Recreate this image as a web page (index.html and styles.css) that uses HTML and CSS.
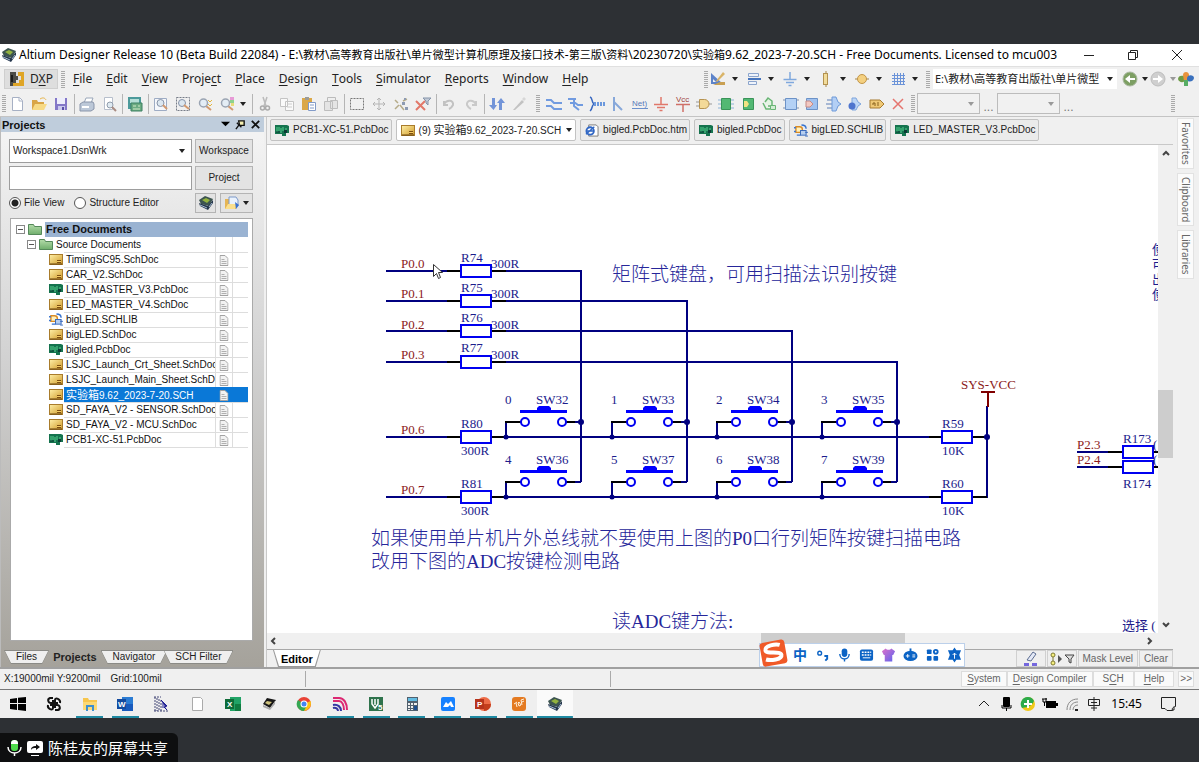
FILE: index.html
```html
<!DOCTYPE html>
<html lang="zh-CN">
<head>
<meta charset="utf-8">
<title>Altium Designer Release 10</title>
<link rel="stylesheet" href="styles.css">
</head>
<body>
<svg class="defs" aria-hidden="true">
  <defs>
    <linearGradient id="gold" x1="0" y1="0" x2="1" y2="1"><stop offset="0" stop-color="#fff0a8"/><stop offset="1" stop-color="#d09a28"/></linearGradient>
    <linearGradient id="leaf" x1="0" y1="0" x2="0" y2="1"><stop offset="0" stop-color="#b4dcaa"/><stop offset="1" stop-color="#6fae6c"/></linearGradient>
    <linearGradient id="shirt" x1="0" y1="0" x2="1" y2="1"><stop offset="0" stop-color="#e070c8"/><stop offset="1" stop-color="#5a62f0"/></linearGradient>
  </defs>
  <symbol id="caret" viewBox="0 0 8 8"><path d="M1 2h6L4 6z" fill="currentColor"/></symbol>
  <symbol id="chip" viewBox="0 0 16 16"><path d="M1 5l6-4 8 3-4 7-8-2z" fill="#3c5450"/><path d="M4 5l4-2 4 2-3 3z" fill="#93b33f"/><path d="M1 8l9 3 5-6v3l-5 7-2-1-6-3z" fill="#25364c"/><path d="M2 10l7 3M11 12l3-4" stroke="#a6bdd5"/></symbol>
  <symbol id="sch" viewBox="0 0 14 11"><rect x=".5" y=".5" width="13" height="10" fill="url(#gold)" stroke="#a97c2c"/><path d="M1 10h12" stroke="#67420f"/><rect x="8" y="6" width="4" height="3" fill="#7d4f12"/><path d="M8 7.500h4" stroke="#f4cd64"/></symbol>
  <symbol id="pcb" viewBox="0 0 14 11"><path d="M0 0h12l2 1v7h-3v3H7V9H0z" fill="#15734e"/><path d="M2 2v5M4 2v4M6 3v5M8 2v4M11 3v5" stroke="#56d28e"/><path d="M9 5h3v3H9z" fill="#0b3b35"/><path d="M1 7h4" stroke="#0b3b35"/></symbol>
  <symbol id="lib" viewBox="0 0 15 14"><path d="M2 3h4a3 3 0 0 1 0 6H2z" fill="#fff1bd" stroke="#d98b24" stroke-width="1.500"/><path d="M8 1c4 0 5 2 5 4M0 4h2M0 8h2M3 12h4" stroke="#3572cf" fill="none" stroke-width="1.500"/><rect x="7" y="7" width="6" height="5" fill="#b6ceef" stroke="#3265ba"/><path d="M12 9h3M12 13h3" stroke="#3265ba"/></symbol>
  <symbol id="folder" viewBox="0 0 14 11"><path d="M.5.500h5l1 2h7v8H.5z" fill="url(#leaf)" stroke="#55895a"/></symbol>
  <symbol id="page" viewBox="0 0 9 11"><path d="M.5.500h5l3 3v7h-8z" fill="#f2f2f2" stroke="#a2a2a2"/><path d="M2 4.500h3M2 6.500h5M2 8.500h5" stroke="#b0b0b0"/></symbol>
  <symbol id="glass" viewBox="0 0 16 16"><path d="M9 10l5 4" stroke="#d29a70" stroke-width="2"/><circle cx="6.500" cy="7" r="4" fill="#e4edf5" stroke="#9aa4b2" stroke-width="1.500"/></symbol>
</svg>

<div class="desktop">
<header class="titlebar">
  <svg class="i16" viewBox="0 0 16 16"><use href="#chip"/></svg>
  <h1>Altium Designer Release 10 (Beta Build 22084) - E:\<span class="han">教材</span>\<span class="han">高等教育出版社</span>\<span class="han">单片微型计算机原理及接口技术</span>-<span class="han">第三版</span>\<span class="han">资料</span>\20230720\<span class="han">实验箱</span>9.62_2023-7-20.SCH - Free Documents. Licensed to mcu003</h1>
  <div class="winbtns">
    <button aria-label="Minimize"><svg viewBox="0 0 12 12"><path d="M1 6.500h10" stroke="#222"/></svg></button>
    <button aria-label="Restore"><svg viewBox="0 0 12 12"><path d="M1.500 3.500h7v7h-7zM3.500 3.500v-2h7v7h-2" fill="none" stroke="#222"/></svg></button>
    <button aria-label="Close"><svg viewBox="0 0 12 12"><path d="M1 1l10 10M11 1L1 11" stroke="#222"/></svg></button>
  </div>
</header>

<div class="menubar">
  <button class="dxp"><svg class="i16" viewBox="0 0 16 16"><path d="M1 1h6v4h2v4H7v6H1z" fill="#4b4b46"/><path d="M9 1h6v14H4v-3h6V9h2V5H9z" fill="#dfa526"/><path d="M3 4v7" stroke="#1c1c1c" stroke-width="2"/></svg><span>D<u>X</u>P</span></button>
  <i class="grip"></i>
  <nav class="menu">
    <button><u>F</u>ile</button><button><u>E</u>dit</button><button><u>V</u>iew</button><button>Proje<u>c</u>t</button><button><u>P</u>lace</button><button><u>D</u>esign</button><button><u>T</u>ools</button><button><u>S</u>imulator</button><button><u>R</u>eports</button><button><u>W</u>indow</button><button><u>H</u>elp</button>
  </nav>
  <div class="quick">
    <i class="grip"></i>
    <button class="drop" aria-label="Drawing tools"><svg class="i16" viewBox="0 0 16 16"><path d="M1 2v11h12z" fill="#5d83c9"/><path d="M3 8v3h3z" fill="#f0f0f0"/><path d="M6 10L13 1l2 2-8 8z" fill="#d9b468"/><path d="M3 14h12v-3h-5z" fill="#c9a052"/></svg><svg class="c" viewBox="0 0 8 8"><use href="#caret"/></svg></button>
    <button class="drop" aria-label="Align"><svg class="i16" viewBox="0 0 16 16"><path d="M2.500 2.500h10v3h-10zM2.500 10.500h8v3h-8z" fill="#eef3fb" stroke="#8ba4cc"/><path d="M2 8h13" stroke="#4775be" stroke-width="2"/></svg><svg class="c" viewBox="0 0 8 8"><use href="#caret"/></svg></button>
    <button class="drop" aria-label="Power sources"><svg class="i16" viewBox="0 0 16 16"><path d="M8 1v7M1.500 8.500h13M4 11.500h8M6.500 14.500h3" stroke="#7fa8dd" stroke-width="1.500"/></svg><svg class="c" viewBox="0 0 8 8"><use href="#caret"/></svg></button>
    <button class="drop" aria-label="Digital devices"><svg class="i16" viewBox="0 0 16 16"><path d="M8 0v16" stroke="#a58648"/><rect x="5.500" y="2.500" width="4" height="11" fill="#f2dc9b" stroke="#b39250"/></svg><svg class="c" viewBox="0 0 8 8"><use href="#caret"/></svg></button>
    <button class="drop" aria-label="Simulation sources"><svg class="i16" viewBox="0 0 16 16"><path d="M1 8h14" stroke="#a58648"/><circle cx="8" cy="8" r="4.500" fill="#f4d080" stroke="#c29548"/></svg><svg class="c" viewBox="0 0 8 8"><use href="#caret"/></svg></button>
    <button class="drop" aria-label="Grids"><svg class="i16" viewBox="0 0 16 16"><path d="M4.500 2v12M7.500 2v12M10.500 2v12M13.500 2v12M2 4.500h13M2 7.500h13M2 10.500h13M2 13.500h13" stroke="#6b93d8"/></svg><svg class="c" viewBox="0 0 8 8"><use href="#caret"/></svg></button>
    <i class="grip"></i>
    <div class="pick path"><select aria-label="Document path"><option>E:\教材\高等教育出版社\单片微型</option></select><svg class="c" viewBox="0 0 8 8"><use href="#caret"/></svg></div>
    <button class="go" aria-label="Back"><svg class="i16" viewBox="0 0 16 16"><circle cx="8" cy="8" r="7" fill="#7d9f63" stroke="#a9b8a0"/><path d="M3 8l5-4v3h5v2H8v3z" fill="#fff"/></svg><svg class="c" viewBox="0 0 8 8"><use href="#caret"/></svg></button>
    <button class="go off" aria-label="Forward"><svg class="i16" viewBox="0 0 16 16"><circle cx="8" cy="8" r="7" fill="#cfcfcf" stroke="#bdbdbd"/><path d="M13 8L8 4v3H3v2h5v3z" fill="#fff"/></svg><svg class="c" viewBox="0 0 8 8"><use href="#caret"/></svg></button>
    <button class="home" aria-label="Home"><svg class="i16" viewBox="0 0 16 16"><path d="M0 8c0-3 3-4 6-3l2 4c-2 3-7 3-8-1z" fill="#6e9b46"/><path d="M5 4c0-4 6-4 6 0v6H6z" fill="#e8923c"/><path d="M9 7c1-4 7-3 7 0s-5 5-7 2z" fill="#3a70bd"/><path d="M6 9h4v6H6z" fill="#57ad64"/></svg></button>
  </div>
</div>

<div class="toolbar">
  <i class="grip"></i>
  <div class="grp">
    <button aria-label="New"><svg viewBox="0 0 16 16"><path d="M3.500 1.500h7l3 3v10h-10z" fill="#fff" stroke="#a6b0c4"/><path d="M10 2v3h3" fill="none" stroke="#a6b0c4"/></svg></button>
    <button aria-label="Open"><svg viewBox="0 0 16 16"><path d="M1 14V4h5l1 2h6v8z" fill="#d9a547"/><path d="M1 14l3-6h12l-3 6z" fill="#f7da86"/><path d="M9 3c3-2 5-1 6 1" stroke="#e8b64c" fill="none"/></svg></button>
    <button aria-label="Save"><svg viewBox="0 0 16 16"><path d="M2 2h12v12H2z" fill="#8478c8"/><path d="M4 2h8v6H4z" fill="#eeeefc"/><path d="M5 10h7v4H5z" fill="#c9c9ee"/><path d="M9 11h2v3H9z" fill="#5b4fa8"/></svg></button>
  </div>
  <div class="grp">
    <button aria-label="Print"><svg viewBox="0 0 16 16"><path d="M5 7l2-5h7l-2 5z" fill="#fff" stroke="#9aa7ba"/><path d="M1 8l3-2h10l1 2v5l-3 2H1z" fill="#bcc8d8" stroke="#8995aa"/><path d="M3 11h7" stroke="#fff" stroke-width="2"/></svg></button>
    <button aria-label="Print preview"><svg viewBox="0 0 16 16"><path d="M3.500 1.500h8v12h-8z" fill="#fff" stroke="#b7bfcc"/><circle cx="9" cy="9" r="3" fill="#dfeaf2" stroke="#909cab"/><path d="M11 11l4 4" stroke="#a98c83" stroke-width="2"/></svg></button>
  </div>
  <div class="grp">
    <button aria-label="Devices"><svg viewBox="0 0 16 16"><path d="M1 1h13v12H1z" fill="#4c9a9b"/><path d="M3 3h9v4H3z" fill="#b6dfd7"/><path d="M4 7h11v8H4z" fill="#6cab82" stroke="#3c8063"/><path d="M6 10h3M11 10h2M6 13h7" stroke="#d2ebc8"/></svg></button>
  </div>
  <div class="grp">
    <button aria-label="Fit document"><svg viewBox="0 0 16 16"><path d="M1.500 2.500h12v12h-12z" fill="#f5f7fb" stroke="#9eacc4"/><circle cx="7.500" cy="7" r="3.500" fill="#dce7f0" stroke="#8592a8"/><path d="M10 9l4 4" stroke="#d29a70" stroke-width="2"/></svg></button>
    <button aria-label="Fit area"><svg viewBox="0 0 16 16"><path d="M1.500 1.500h13v13h-13z" fill="none" stroke="#777d88" stroke-dasharray="2 1"/><circle cx="7" cy="7" r="3.500" fill="#dce7f0" stroke="#8592a8"/><path d="M9 9l5 4" stroke="#d29a70" stroke-width="2"/></svg></button>
    <button aria-label="Zoom selected"><svg viewBox="0 0 16 16"><use href="#glass"/><path d="M11 4l2 2 2-2M11 8l2 2 2-2" stroke="#e3b53c" fill="none"/></svg></button>
    <button aria-label="Filter zoom"><svg viewBox="0 0 16 16"><use href="#glass"/><path d="M11 1h4v3h-4z" fill="#e79ad6"/><path d="M11 4h4v3h-4z" fill="#8ed28d"/><path d="M12 7h3v3h-3z" fill="#e8dc7a"/></svg></button>
    <svg class="c" viewBox="0 0 8 8"><use href="#caret"/></svg>
  </div>
  <div class="grp">
    <button aria-label="Cut"><svg viewBox="0 0 16 16"><path d="M6 1l3 9M10 1L7 10" stroke="#bbb" stroke-width="1.500"/><circle cx="5.500" cy="12" r="2" fill="none" stroke="#aaa" stroke-width="1.500"/><circle cx="10.500" cy="12" r="2" fill="none" stroke="#aaa" stroke-width="1.500"/></svg></button>
    <button aria-label="Copy"><svg viewBox="0 0 16 16"><path d="M1.500 2.500h7v8h-7zM6.500 5.500h8v9h-8z" fill="#fafafa" stroke="#c4c4c4"/><path d="M8 8h5M8 11h5" stroke="#ccc"/></svg></button>
    <button aria-label="Paste"><svg viewBox="0 0 16 16"><path d="M1 2h10v12H1z" fill="#dba848"/><path d="M4 1h4v3H4z" fill="#9c9c98"/><path d="M7.500 6.500h7v8h-7z" fill="#fff" stroke="#829bc8"/><path d="M9 9h4M9 12h4" stroke="#829bc8"/></svg></button>
    <button aria-label="Rubber stamp"><svg viewBox="0 0 16 16"><path d="M4.500 1.500h8v9h-8z" fill="#efefef" stroke="#bbb"/><path d="M1.500 5.500h8v9h-8zM7.500 4.500h7v8h-7z" fill="#e4e4e4" stroke="#bdbdbd"/></svg></button>
  </div>
  <div class="grp">
    <button aria-label="Select area"><svg viewBox="0 0 16 16"><path d="M1.500 2.500h13v11h-13z" fill="none" stroke="#777" stroke-dasharray="2 1"/></svg></button>
    <button aria-label="Move"><svg viewBox="0 0 16 16"><path d="M8 2v12M2 8h12M6 4l2-2 2 2M6 12l2 2 2-2M4 6L2 8l2 2M12 6l2 2-2 2" stroke="#b5b5b5" fill="none"/></svg></button>
    <button aria-label="Deselect"><svg viewBox="0 0 16 16"><path d="M2 4l3 3M7 9l4 5M10 5l4-2M6 9l-4 4" stroke="#b5ab88" stroke-width="1.500"/><path d="M9 6h3v3H9zM12 11h3v3h-3zM11 2h2v2h-2z" fill="#8d9bb2"/></svg></button>
    <button aria-label="Clear filter"><svg viewBox="0 0 16 16"><path d="M1 5l9 9M10 5l-9 9" stroke="#e2786a" stroke-width="2"/><path d="M8 2h8l-3 3v4l-2-2V5z" fill="#c2cad7" stroke="#8594aa"/></svg></button>
  </div>
  <div class="grp">
    <button aria-label="Undo"><svg viewBox="0 0 16 16"><path d="M3 5v4h4M3 8c3-5 10-4 9 1-1 2-2 3-4 4" fill="none" stroke="#c2c2c2" stroke-width="2"/></svg></button>
    <button aria-label="Redo"><svg viewBox="0 0 16 16"><path d="M13 5v4H9M13 8C10 3 3 4 4 9c1 2 2 3 4 4" fill="none" stroke="#c9c9c9" stroke-width="2"/></svg></button>
  </div>
  <div class="grp">
    <button aria-label="Hierarchy"><svg viewBox="0 0 16 16"><path d="M3 2h3v7h2l-3.500 5L0 9h3zM10 14h3V7h3l-4-5-4 5h2z" fill="#7294d8"/></svg></button>
    <button aria-label="Cross probe"><svg viewBox="0 0 16 16"><path d="M2 14L11 4l2 2-9 8z" fill="#c2c2c2"/><path d="M11 3l2-2 2 2-2 2z" fill="#d7d7d7"/></svg></button>
  </div>
  <i class="grip"></i>
  <div class="grp wiring">
    <button aria-label="Wire"><svg viewBox="0 0 16 16"><path d="M0 4h5l3 3h8M0 10h5l3 3h8" fill="none" stroke="#719be0" stroke-width="2"/></svg></button>
    <button aria-label="Bus"><svg viewBox="0 0 16 16"><path d="M1 3h8M7 3v7l5 4M7 6l4 3h5M3 7h4" fill="none" stroke="#719be0" stroke-width="2"/></svg></button>
    <button aria-label="Harness"><svg viewBox="0 0 16 16"><path d="M1 1c3 1 1 5 4 7-3 2-1 5-4 7" fill="none" stroke="#3968c0" stroke-width="1.500"/><path d="M5 8h11" stroke="#6b98dd" stroke-width="4" stroke-dasharray="2 1"/></svg></button>
    <button aria-label="Bus entry"><svg viewBox="0 0 16 16"><path d="M4 1v14M4 6l8 8" fill="none" stroke="#87a8da" stroke-width="2"/></svg></button>
    <button aria-label="Net label"><svg viewBox="0 0 16 16"><text x="0" y="10" class="net">Net)</text><path d="M0 12.500h16" stroke="#6b8fcc"/></svg></button>
    <button aria-label="GND"><svg viewBox="0 0 16 16"><path d="M8 1v7M1 8.500h14M4 11.500h8M6.500 14.500h3" stroke="#e0776a" stroke-width="1.500"/></svg></button>
    <button aria-label="VCC"><svg viewBox="0 0 16 16"><text x="1" y="6" class="vcc">Vcc</text><path d="M1 8.500h14M8 9v7" stroke="#cf6f67" stroke-width="1.500"/></svg></button>
    <button aria-label="Part"><svg viewBox="0 0 16 16"><path d="M0 6h4M0 10h4M12 8h4" stroke="#999"/><path d="M3.500 3.500h5a4.500 4.500 0 0 1 0 9h-5z" fill="#f3d998" stroke="#b69350"/></svg></button>
    <button aria-label="Sheet symbol"><svg viewBox="0 0 16 16"><path d="M0 4h16M0 8h16M0 12h16" stroke="#8eb4d7"/><path d="M3.500 2.500h9v11h-9z" fill="#52b873" stroke="#3a9459"/></svg></button>
    <button aria-label="Sheet entry"><svg viewBox="0 0 16 16"><path d="M3.500 2.500h10v11h-10z" fill="#52b873" stroke="#3a9459"/><path d="M4 5h3l2 3-2 3H4z" fill="#f1e382"/></svg></button>
    <button aria-label="Device sheet"><svg viewBox="0 0 16 16"><path d="M4 6l3-4 4 3v5H7M2 7l3 6h4" fill="#e4f4e4" stroke="#69b575" stroke-width="1.500"/><path d="M9.500 9.500h5v4h-5z" fill="#d1edd3" stroke="#69b575"/></svg></button>
    <button aria-label="C code symbol"><svg viewBox="0 0 16 16"><path d="M0 4h16M0 12h16" stroke="#8292ad"/><path d="M2.500 2.500h11v11h-11z" fill="#b4d1f5" stroke="#6c92c7"/></svg></button>
    <button aria-label="C code entry"><svg viewBox="0 0 16 16"><path d="M2.500 2.500h11v11h-11z" fill="#9fc1ef" stroke="#6c92c7"/><path d="M2 5h4l3 3-3 3H2z" fill="#f3c9c2" stroke="#c68a85"/></svg></button>
    <button aria-label="Harness connector"><svg viewBox="0 0 16 16"><path d="M1 4h6M0 8h6M1 12h6" stroke="#5d7fb8"/><path d="M6 1h4l2 5 3 2-3 2-2 5H6z" fill="#b3cff5" stroke="#6e9ad9"/></svg></button>
    <button aria-label="Harness entry"><svg viewBox="0 0 16 16"><path d="M5 2h4l2 4 3 2-3 2-2 4H5z" fill="#bdd6f6" stroke="#7ea5dd"/><circle cx="5" cy="10" r="3.500" fill="#4f75ce"/></svg></button>
    <button aria-label="Port"><svg viewBox="0 0 16 16"><path d="M1 4h10l4 4-4 4H1z" fill="#efc875" stroke="#a67b30"/><path d="M4 9V7h2v3M9 6v4" stroke="#87601d" fill="none"/></svg></button>
    <button aria-label="No ERC"><svg viewBox="0 0 16 16"><path d="M3 3l10 10M13 3L3 13" stroke="#e5746e" stroke-width="1.500"/></svg></button>
  </div>
  <i class="grip"></i>
  <div class="pick dim"><select aria-label="Format one" disabled><option></option></select><svg class="c" viewBox="0 0 8 8"><use href="#caret"/></svg></div>
  <button class="dots" aria-label="More one">...</button>
  <div class="pick dim"><select aria-label="Format two" disabled><option></option></select><svg class="c" viewBox="0 0 8 8"><use href="#caret"/></svg></div>
  <button class="dots" aria-label="More two">...</button>
  <i class="grip end"></i>
</div>

<div class="work">
  <aside class="panel">
    <div class="phead"><h2>Projects</h2>
      <button aria-label="Panel menu"><svg viewBox="0 0 12 12"><path d="M1 3h10L6 8z" fill="#000"/></svg></button>
      <button aria-label="Pin"><svg viewBox="0 0 12 12"><path d="M4 2h6v5H5z" fill="#f5efb0" stroke="#111" stroke-width="1.500"/><path d="M2 4l5 5M4 7l-3 4" stroke="#111" stroke-width="1.500"/></svg></button>
      <button aria-label="Close panel"><svg viewBox="0 0 12 12"><path d="M2 2l8 8M10 2l-8 8" stroke="#111" stroke-width="2"/></svg></button>
    </div>
    <form class="pform">
      <div class="pick ws"><select aria-label="Workspace"><option>Workspace1.DsnWrk</option></select><svg class="c" viewBox="0 0 8 8"><use href="#caret"/></svg></div>
      <button type="button">Workspace</button>
      <input type="text" aria-label="Project name">
      <button type="button">Project</button>
      <div class="radios">
        <label><input type="radio" name="v" checked>File View</label>
        <label><input type="radio" name="v">Structure Editor</label>
      </div>
      <div class="pair">
        <button type="button" aria-label="Compile"><svg class="i16" viewBox="0 0 16 16"><use href="#chip"/></svg></button>
        <button type="button" class="wide" aria-label="Options"><svg class="i16" viewBox="0 0 16 16"><path d="M1 14V4h6l1 2h4v8z" fill="#e5b554"/><path d="M5 2h7l2 3v6H5z" fill="#eaf2fd" stroke="#7d99c8"/><path d="M1 14l3-5h9l-2 5z" fill="#fbdf8c"/><path d="M11 7l4 3-3 4z" fill="#3b72cf"/></svg><svg class="c" viewBox="0 0 8 8"><use href="#caret"/></svg></button>
      </div>
    </form>
    <div class="tree">
      <div class="root"><i class="box"></i><svg class="f" viewBox="0 0 14 11"><use href="#folder"/></svg><b>Free Documents</b></div>
      <div class="src"><i class="box"></i><svg class="f" viewBox="0 0 14 11"><use href="#folder"/></svg><span>Source Documents</span><i class="g1"></i><i class="g2"></i></div>
      <ul>
        <li><svg class="f" viewBox="0 0 14 11"><use href="#sch"/></svg><span>TimingSC95.SchDoc</span><svg class="p" viewBox="0 0 9 11"><use href="#page"/></svg><i></i></li>
        <li><svg class="f" viewBox="0 0 14 11"><use href="#sch"/></svg><span>CAR_V2.SchDoc</span><svg class="p" viewBox="0 0 9 11"><use href="#page"/></svg><i></i></li>
        <li><svg class="f" viewBox="0 0 14 11"><use href="#pcb"/></svg><span>LED_MASTER_V3.PcbDoc</span><svg class="p" viewBox="0 0 9 11"><use href="#page"/></svg><i></i></li>
        <li><svg class="f" viewBox="0 0 14 11"><use href="#sch"/></svg><span>LED_MASTER_V4.SchDoc</span><svg class="p" viewBox="0 0 9 11"><use href="#page"/></svg><i></i></li>
        <li><svg class="f" viewBox="0 0 15 14"><use href="#lib"/></svg><span>bigLED.SCHLIB</span><svg class="p" viewBox="0 0 9 11"><use href="#page"/></svg><i></i></li>
        <li><svg class="f" viewBox="0 0 14 11"><use href="#sch"/></svg><span>bigLED.SchDoc</span><svg class="p" viewBox="0 0 9 11"><use href="#page"/></svg><i></i></li>
        <li><svg class="f" viewBox="0 0 14 11"><use href="#pcb"/></svg><span>bigled.PcbDoc</span><svg class="p" viewBox="0 0 9 11"><use href="#page"/></svg><i></i></li>
        <li><svg class="f" viewBox="0 0 14 11"><use href="#sch"/></svg><span>LSJC_Launch_Crt_Sheet.SchDoc</span><svg class="p" viewBox="0 0 9 11"><use href="#page"/></svg><i></i></li>
        <li><svg class="f" viewBox="0 0 14 11"><use href="#sch"/></svg><span>LSJC_Launch_Main_Sheet.SchD</span><svg class="p" viewBox="0 0 9 11"><use href="#page"/></svg><i></i></li>
        <li class="sel"><svg class="f" viewBox="0 0 14 11"><use href="#sch"/></svg><span><span class="han">实验箱</span>9.62_2023-7-20.SCH</span><svg class="p" viewBox="0 0 9 11"><use href="#page"/></svg><i></i></li>
        <li><svg class="f" viewBox="0 0 14 11"><use href="#sch"/></svg><span>SD_FAYA_V2 - SENSOR.SchDoc</span><svg class="p" viewBox="0 0 9 11"><use href="#page"/></svg><i></i></li>
        <li><svg class="f" viewBox="0 0 14 11"><use href="#sch"/></svg><span>SD_FAYA_V2 - MCU.SchDoc</span><svg class="p" viewBox="0 0 9 11"><use href="#page"/></svg><i></i></li>
        <li><svg class="f" viewBox="0 0 14 11"><use href="#pcb"/></svg><span>PCB1-XC-51.PcbDoc</span><svg class="p" viewBox="0 0 9 11"><use href="#page"/></svg><i></i></li>
      </ul>
    </div>
    <div class="ptabs"><button><span>Files</span></button><button class="on"><span>Projects</span></button><button><span>Navigator</span></button><button><span>SCH Filter</span></button></div>
  </aside>

  <main class="editor">
    <div class="doctabs">
      <button><svg class="f" viewBox="0 0 14 11"><use href="#pcb"/></svg>PCB1-XC-51.PcbDoc</button>
      <button class="on"><svg class="f" viewBox="0 0 14 11"><use href="#sch"/></svg><span>(9) <span class="han">实验箱</span>9.62_2023-7-20.SCH</span><svg class="c" viewBox="0 0 8 8"><use href="#caret"/></svg></button>
      <button><svg class="f" viewBox="0 0 15 14"><path d="M4 1h8l2 2v10H4z" fill="#fff" stroke="#777"/><circle cx="5.500" cy="7.500" r="4" fill="#fff" stroke="#2f66c4" stroke-width="2"/><path d="M2 7.500h7M1 11L10 3" stroke="#2f66c4" stroke-width="1.500"/></svg>bigled.PcbDoc.htm</button>
      <button><svg class="f" viewBox="0 0 14 11"><use href="#pcb"/></svg>bigled.PcbDoc</button>
      <button><svg class="f" viewBox="0 0 15 14"><use href="#lib"/></svg>bigLED.SCHLIB</button>
      <button><svg class="f" viewBox="0 0 14 11"><use href="#pcb"/></svg>LED_MASTER_V3.PcbDoc</button>
    </div>
    <div class="view">
      <svg class="sheet" role="img" aria-label="Schematic">
        <defs>
          <g id="res"><path d="M447 0h14M491 0h15" class="pin"/><rect x="461" y="-6" width="30" height="12" class="part"/></g>
          <g id="sw"><path d="M506 16V1" class="wire"/><path d="M505 1h16M566 1h10" class="pin"/><path d="M575 1h6" class="wire"/><circle cx="525" cy="1" r="4" class="part"/><circle cx="562" cy="1" r="4" class="part"/><path d="M520 -9.500h47" stroke="#00f" stroke-width="3"/><path d="M537 -9v-4l2-2h10l2 2v4z" fill="#00f"/><circle cx="506" cy="16" r="2.500" class="dot"/></g>
        </defs>
        <g transform="translate(-267 -145)">
          <g class="wire">
            <path d="M386 271h62M506 271h75V482M386 301h62M506 301h181V482M386 331h62M506 331h286V482M386 362h62M506 362h391V482"/>
            <path d="M386 437h62M506 437h424M386 497h62M506 497h424M987 406v92"/>
            <path d="M1077 452h31M1077 467h31"/>
          </g>
          <use href="#res" y="271"/><use href="#res" y="301"/><use href="#res" y="331"/><use href="#res" y="362"/><use href="#res" y="437"/><use href="#res" y="497"/>
          <path d="M929 437h14M972 437h15M929 497h14M972 497h15M1108 452h14M1153 452h6M1108 467h14M1153 467h6" class="pin"/>
          <g class="part"><rect x="942" y="431" width="30" height="12"/><rect x="942" y="491" width="30" height="12"/><rect x="1123" y="446" width="30" height="12"/><rect x="1123" y="461" width="30" height="12"/></g>
          <use href="#sw" y="421"/><use href="#sw" x="106" y="421"/><use href="#sw" x="211" y="421"/><use href="#sw" x="316" y="421"/>
          <use href="#sw" y="481"/><use href="#sw" x="106" y="481"/><use href="#sw" x="211" y="481"/><use href="#sw" x="316" y="481"/>
          <g class="dot"><circle cx="581" cy="422" r="3"/><circle cx="687" cy="422" r="3"/><circle cx="792" cy="422" r="3"/><circle cx="897" cy="422" r="3"/><circle cx="987" cy="437" r="3"/></g>
          <path d="M981 392h14M988 392v15" stroke="#800000" stroke-width="2"/>
          <g class="netname">
            <text x="401" y="268">P0.0</text><text x="401" y="298">P0.1</text><text x="401" y="329">P0.2</text><text x="401" y="359">P0.3</text><text x="401" y="434">P0.6</text><text x="401" y="494">P0.7</text>
            <text x="961" y="389">SYS-VCC</text><text x="1077" y="449">P2.3</text><text x="1077" y="464">P2.4</text>
          </g>
          <g class="ref">
            <text x="461" y="262">R74</text><text x="461" y="292">R75</text><text x="461" y="322">R76</text><text x="461" y="352">R77</text><text x="461" y="428">R80</text><text x="461" y="488">R81</text>
            <text x="491" y="268">300R</text><text x="491" y="298">300R</text><text x="491" y="329">300R</text><text x="491" y="359">300R</text><text x="461" y="455">300R</text><text x="461" y="515">300R</text>
            <text x="505" y="404">0</text><text x="536" y="404">SW32</text><text x="611" y="404">1</text><text x="642" y="404">SW33</text><text x="716" y="404">2</text><text x="747" y="404">SW34</text><text x="821" y="404">3</text><text x="852" y="404">SW35</text>
            <text x="505" y="464">4</text><text x="536" y="464">SW36</text><text x="611" y="464">5</text><text x="642" y="464">SW37</text><text x="716" y="464">6</text><text x="747" y="464">SW38</text><text x="821" y="464">7</text><text x="852" y="464">SW39</text>
            <text x="942" y="428">R59</text><text x="942" y="455">10K</text><text x="942" y="488">R60</text><text x="942" y="515">10K</text>
            <text x="1123" y="443">R173</text><text x="1123" y="488">R174</text><text x="1153" y="449">(</text><text x="1153" y="464">(</text>
            <text x="1152" y="254">使</text><text x="1152" y="269">可</text><text x="1152" y="284">出</text><text x="1152" y="299">使</text>
            <text x="1122" y="630">选择 (</text>
          </g>
          <g class="note">
            <text x="612" y="281">矩阵式键盘，可用扫描法识别按键</text>
            <text x="371" y="545">如果使用单片机片外总线就不要使用上图的P0口行列矩阵按键扫描电路</text>
            <text x="371" y="568">改用下图的ADC按键检测电路</text>
            <text x="612" y="628">读ADC键方法:</text>
          </g>
          <path d="M433.500 264.500v12l3-3 2 5 2-1-2-5h4z" fill="#fff" stroke="#333"/>
        </g>
      </svg>
      <div class="vbar"><svg viewBox="0 0 10 10"><path d="M2 7l3-3 3 3" class="chev"/></svg><i></i><svg viewBox="0 0 10 10"><path d="M2 3l3 3 3-3" class="chev"/></svg></div>
      <div class="hbar"><svg viewBox="0 0 10 10"><path d="M6 2L3 5l3 3" class="chev"/></svg><i></i><svg viewBox="0 0 10 10"><path d="M4 2l3 3-3 3" class="chev"/></svg></div>
    </div>
    <div class="edbar">
      <button class="edtab"><span>Editor</span></button>
      <div class="mask">
        <button aria-label="Highlight"><svg class="i16" viewBox="0 0 16 16"><path d="M4 9l6-8 3 2-5 7z" fill="#e4e9f6" stroke="#5b6c91"/><path d="M1 12h5v3H1zM9 12h5v3H9z" fill="#7467dd"/></svg></button>
        <button aria-label="Filter"><svg viewBox="0 0 26 14"><circle cx="4" cy="3" r="2" fill="#f3ed7d" stroke="#807b32"/><circle cx="4" cy="11" r="2" fill="#f3ed7d" stroke="#807b32"/><path d="M4 5v4" stroke="#807b32"/><path d="M9 3v8l4-4z" fill="#555"/><path d="M16 3h9l-3 4v4l-2-1V7z" fill="#ddd" stroke="#444"/></svg></button>
        <button>Mask Level</button><button>Clear</button>
      </div>
    </div>
    <div class="ime">
      <svg class="sogou" viewBox="0 0 30 30"><g transform="rotate(-10 15 15)"><rect x="2" y="3" width="25" height="24" rx="3" fill="#f05a28"/><path d="M22 8c-4-2-15-2-15 3 0 4 15 3 15 7 0 5-12 4-16 2" fill="none" stroke="#fff" stroke-width="4"/></g></svg>
      <b>中</b>
      <svg viewBox="0 0 16 16"><circle cx="5" cy="6" r="2" fill="none" stroke="#0b63c5" stroke-width="1.500"/><path d="M10 9h3v3l-2 2" fill="none" stroke="#0b63c5" stroke-width="2"/></svg>
      <svg viewBox="0 0 16 16"><rect x="5" y="1" width="6" height="9" rx="3" fill="#0b63c5"/><path d="M3 7c0 7 10 7 10 0M8 12v3" fill="none" stroke="#0b63c5" stroke-width="1.500"/></svg>
      <svg viewBox="0 0 16 16"><rect x="1" y="2" width="14" height="12" rx="2" fill="#0b63c5"/><path d="M3 5h10M3 8h10" stroke="#fff" stroke-width="1.500" stroke-dasharray="2 1"/><path d="M4 11h8" stroke="#fff"/></svg>
      <svg viewBox="0 0 16 16"><path d="M1 4l4-3c1 2 5 2 6 0l4 3-2 4h-1v7H4V8H3z" fill="url(#shirt)"/></svg>
      <svg viewBox="0 0 16 16"><path d="M8 1v4" stroke="#0b63c5" stroke-width="2"/><ellipse cx="8" cy="9" rx="7.500" ry="5.500" fill="#0b63c5"/><path d="M5 7v4M3 9h4M10 8h3M10 10h3" stroke="#fff"/></svg>
      <svg viewBox="0 0 16 16"><rect x="2" y="2" width="5" height="5" rx="1" fill="#0b63c5"/><rect x="9.500" y="2.500" width="4" height="4" rx="2" fill="none" stroke="#0b63c5" stroke-width="2"/><rect x="2" y="9" width="5" height="5" rx="1" fill="#0b63c5"/><rect x="9" y="9" width="5" height="5" rx="1" fill="#0b63c5"/></svg>
      <svg viewBox="0 0 16 16"><path d="M8 0l2 3h5l-2 5 2 5h-5l-2 3-2-3H1l2-5-2-5h5z" fill="#0b63c5"/><path d="M8 6v6M6 8l2-2 2 2" stroke="#fff" fill="none"/></svg>
    </div>
  </main>
  <nav class="rail"><button>Favorites</button><button>Clipboard</button><button>Libraries</button></nav>
</div>

<div class="status">
  <span>X:19000mil Y:9200mil</span><span>Grid:100mil</span>
  <i class="s1"></i><i class="s2"></i>
  <div class="sbtns"><button><span><u>S</u>ystem</span></button><button><span><u>D</u>esign Compiler</span></button><button><span>S<u>C</u>H</span></button><button><span><u>H</u>elp</span></button><button class="more">&gt;&gt;</button></div>
</div>

<footer class="taskbar">
  <div class="apps">
    <button aria-label="Start"><svg viewBox="0 0 16 16"><path d="M0 3l7-1v5H0zM8 1.800L16 1v6H8zM0 8h7v6l-7-1zM8 8h8v7l-8-1z" fill="#000"/></svg></button>
    <button aria-label="Knot"><svg viewBox="0 0 16 16"><path d="M7 2H4c-3 1-2 5 1 5h2V4M9 14h3c3-1 2-5-1-5H9v3M14 7c1-4-5-6-5-3v3h3M2 9c-1 4 5 6 5 3V9H4" fill="none" stroke="#111" stroke-width="2"/></svg></button>
    <button class="run" aria-label="Explorer"><svg viewBox="0 0 16 16"><path d="M1 2h5l1 2h8v10H1z" fill="#f7c64d"/><path d="M1 6h14v8H1z" fill="#fbd975"/><path d="M4 15V9h8v6h-2v-4H6v4z" fill="#3c8fd0"/></svg></button>
    <button class="run" aria-label="Word"><svg viewBox="0 0 16 16"><path d="M5 1h11v14H5z" fill="#2b7cd3"/><path d="M5 8h11v7H5z" fill="#185abd"/><path d="M0 3h9v10H0z" fill="#134a9e"/><text x="1" y="11" class="app">W</text></svg></button>
    <button aria-label="Serial tool"><svg viewBox="0 0 16 16"><path d="M1 1h7M2 1v14M4 2v13M6 3v12M8 4v11M1 15h14" stroke="#434777" stroke-dasharray="2 1"/><path d="M8 4l6 6-3 1 3 3M10 6v6" fill="#25269c" stroke="#1c1c91"/></svg></button>
    <button aria-label="Document"><svg viewBox="0 0 16 16"><path d="M3.500 1.500h8l2 2v11h-10z" fill="#fff" stroke="#aaa"/></svg></button>
    <button aria-label="Excel"><svg viewBox="0 0 16 16"><path d="M5 1h11v14H5z" fill="#21a366"/><path d="M10 8h6v7h-6z" fill="#107c41"/><path d="M0 3h9v10H0z" fill="#0e6b38"/><text x="2" y="11" class="app">X</text></svg></button>
    <button aria-label="Card"><svg viewBox="0 0 16 16"><path d="M6 2l9 2-6 8-7-4z" fill="#171717"/><path d="M6 5l5 1-3 3-4-2z" fill="#cec27c"/><path d="M2 9l7 3 5-7v3l-5 6-7-3z" fill="#a9a9a9"/></svg></button>
    <button aria-label="Chrome"><svg viewBox="0 0 16 16"><circle cx="8" cy="8" r="7" fill="#e94336"/><path d="M8 8l6.500-3A7.500 7.500 0 0 1 8 15z" fill="#fbc116"/><path d="M8 8L2 4a7 7 0 0 0 6 11l2-4z" fill="#34a853"/><circle cx="8" cy="8" r="3.500" fill="#fff"/><circle cx="8" cy="8" r="2.500" fill="#4285f4"/></svg></button>
    <button class="run" aria-label="Signal"><svg viewBox="0 0 16 16"><path d="M1 2h6c5 0 8 5 8 12M1 5h6c3 0 5 4 5 9" fill="none" stroke="#dc2872" stroke-width="2"/><path d="M1 9c5-1 8 2 8 6M1 12c3-1 5 1 5 3" fill="none" stroke="#3536a2" stroke-width="2"/></svg></button>
    <button class="run" aria-label="Keil"><svg viewBox="0 0 16 16"><rect x="1" y="1" width="14" height="14" fill="#2f734c"/><path d="M4 3v5l3 4 3-4V3M7 3v6" stroke="#fff" fill="none" stroke-width="1.500"/><text x="10" y="14" class="app">5</text></svg></button>
    <button class="run" aria-label="Calculator"><svg viewBox="0 0 16 16"><path d="M3 1h11v14H3z" fill="#51606e"/><path d="M4 2h9v3H4z" fill="#63bce2"/><path d="M4 7h2v2H4zM7 7h2v2H7zM10 7h3v2h-3zM4 10h2v2H4zM7 10h2v2H7zM4 13h2v1H4zM7 13h2v1H7z" fill="#eee"/><path d="M10 10h3v4h-3z" fill="#1d4f8f"/></svg></button>
    <button class="run" aria-label="Meeting"><svg viewBox="0 0 16 16"><rect x="1" y="1" width="14" height="14" rx="2" fill="#1681ff"/><path d="M3 11l3-5 2 2 3-3 3 6h-3l-1-2-2 2z" fill="#fff"/></svg></button>
    <button class="run" aria-label="PowerPoint"><svg viewBox="0 0 16 16"><circle cx="9" cy="8" r="7" fill="#ed6c47"/><path d="M9 8h7a7 7 0 0 1-7 7z" fill="#c43e1c"/><path d="M0 3h9v10H0z" fill="#b7341c"/><text x="2" y="11" class="app">P</text></svg></button>
    <button class="run" aria-label="TOF"><svg viewBox="0 0 16 16"><rect x="1" y="1" width="14" height="14" rx="3" fill="#e47a21"/><path d="M3 8l3-2M5 7l1 4M8 6l2 3-2 1-1-3zM11 9l-1-5 3-1M11 6l2-1" stroke="#fff1dc" fill="none"/></svg></button>
    <button class="run active" aria-label="Altium Designer"><svg viewBox="0 0 16 16"><use href="#chip"/></svg></button>
  </div>
  <div class="tray">
    <svg viewBox="0 0 16 16"><path d="M3 10l5-5 5 5" fill="none" stroke="#222" stroke-width="1"/></svg>
    <svg viewBox="0 0 16 16"><rect x="5" y="1" width="7" height="10" rx="1" fill="#000"/><path d="M4 9v3h9V9M8.500 12v3" fill="none" stroke="#000"/></svg>
    <svg viewBox="0 0 16 16"><circle cx="8" cy="8" r="7" fill="#f2c919"/><path d="M8 1A7 7 0 0 0 2 12c3-1 9 0 12-7A7 7 0 0 0 8 1z" fill="#2bab4b"/><path d="M4 8h8M8 4v8" stroke="#fff" stroke-width="2"/></svg>
    <svg viewBox="0 0 16 16"><path d="M4 5h10v7H4z" fill="#000"/><path d="M14 7h2v3h-2z" fill="#000"/><path d="M0 3h5M1 3v3h3V2M2.500 6v4" stroke="#000" fill="none"/></svg>
    <svg viewBox="0 0 16 16"><path d="M3 14C3 7 7 3 14 3M6 14c0-5 3-8 8-8M9 14c0-3 2-5 5-5" fill="none" stroke="#888"/><path d="M11 13h3v2h-3z" fill="#222"/></svg>
    <svg viewBox="0 0 16 16"><path d="M8 1v14M2.500 3.500h11v6h-11zM5 6.500h6" fill="none" stroke="#222"/><path d="M5 12h6" stroke="#222"/></svg>
    <time>15:45</time>
    <svg viewBox="0 0 16 16"><path d="M1.500 1.500h14v9c-2 0-4 2-3 4H7l-2-2H1.500z" fill="none" stroke="#222"/><path d="M14 11v3h-2" stroke="#222" fill="none"/></svg>
  </div>
</footer>

<div class="share">
  <svg viewBox="0 0 16 18"><rect x="5" y="1" width="7" height="11" rx="3" fill="#4ddc4a"/><path d="M5 5V4c0-4 7-4 7 0v1z" fill="#fff"/><path d="M2 8c0 8 13 8 13 0M8.500 14v3" fill="none" stroke="#fff" stroke-width="1.500"/></svg>
  <svg viewBox="0 0 16 18"><rect y="2" width="16" height="12" rx="2" fill="#fff"/><path d="M4 16.500h8" stroke="#fff"/><path d="M4 11c0-3 2-4 5-4V5l4 3-4 3V9c-2 0-4 0-5 2z" fill="#111"/></svg>
  <span>陈桂友的屏幕共享</span>
</div>
</div>
</body>
</html>
```
FILE: styles.css
```css
* { box-sizing: border-box; }
html, body { height: 100%; margin: 0; }
body { background: #2d3034; font: 10px/14px "Liberation Sans", "Noto Sans CJK SC", sans-serif; color: #222; overflow: hidden; }
button, select, input { font: inherit; color: inherit; margin: 0; padding: 0; border: 0; background: none; border-radius: 0; }
button { display: flex; align-items: center; justify-content: center; white-space: nowrap; flex-shrink: 0; }
h1, h2, ul { margin: 0; padding: 0; list-style: none; }
svg { display: block; flex-shrink: 0; }
u { text-underline-offset: 2px; }
.han { font-size: 11px; }
.defs { position: absolute; width: 0; height: 0; }
.i16 { width: 16px; height: 16px; }
.c { width: 8px; height: 8px; }
.f { width: 14px; height: 13px; }
.desktop { height: 100%; display: flex; flex-direction: column; padding-top: 44px; }

.titlebar { height: 22px; background: #fff; display: flex; align-items: center; gap: 2px; padding-left: 1px; }
.titlebar h1 { flex: 1; min-width: 0; font: 12px/18px "Noto Sans", "Noto Sans CJK SC", sans-serif; color: #000; white-space: nowrap; }
.titlebar .han { font-size: 11px; }
.winbtns { display: flex; }
.winbtns button { width: 44px; height: 22px; }
.winbtns svg { width: 12px; height: 12px; }

.menubar { height: 25px; background: #f0f0f0; display: flex; align-items: center; border-top: 1px solid #e0e0e0; padding-left: 4px; font: 12px/18px "Noto Sans", "Noto Sans CJK SC", sans-serif; }
.dxp { width: 54px; height: 20px; gap: 5px; background: #dedede; border: 1px solid #cfcfcf; margin-right: 3px; }
.grip { width: 4px; height: 17px; flex-shrink: 0; background: repeating-linear-gradient(#aaa 0 1px, #f0f0f0 1px 2px); }
.menu { display: flex; gap: 14px; margin-left: 8px; }
.quick { margin-left: auto; display: flex; align-items: center; padding-right: 5px; }
.drop { width: 36px; gap: 5px; justify-content: flex-start; }
.drop:first-of-type { margin-left: 2px; }
.pick { position: relative; background: #fff; display: flex; align-items: center; }
.pick select { appearance: none; width: 100%; height: 100%; padding-left: 3px; overflow: hidden; opacity: 1; }
.pick .c { position: absolute; right: 4px; pointer-events: none; }
.path { width: 184px; height: 20px; margin: 0 4px 0 3px; font-size: 11px; }
.path select { padding-left: 2px; }
.path .c { right: 3px; }
.go { width: 28px; gap: 3px; }
.off .c { color: #999; }
.home { margin-left: 1px; }

.toolbar { height: 26px; background: #f0f0f0; display: flex; align-items: center; padding: 0 24px 0 2px; border-bottom: 1px solid #c4c4c4; }
.grp { display: flex; align-items: center; }
.grp + .grp { border-left: 1px solid #b5b5b5; margin-left: 2px; padding-left: 1px; height: 20px; }
.grp button { width: 22px; height: 20px; }
.grp button svg { width: 16px; height: 16px; }
.grp > .c { margin: 0 3px 0 1px; }
.toolbar .grip { margin: 0 3px 0 6px; }
.toolbar .grip:first-child { margin: 0; }
.toolbar .wiring + .grip { margin: 0 2px; }
.wiring { width: 366px; }
.wiring button { flex: 1; width: auto; }
.net { font: 8px "Liberation Sans", sans-serif; fill: #5578b8; }
.vcc { font: 8px "Liberation Sans", sans-serif; fill: #a04440; }
.dim { width: 63px; height: 21px; background: #f1f1f1; border: 1px solid #bcbcbc; }
.dim .c { color: #999; }
.dots { width: 17px; height: 20px; align-items: flex-end; color: #777; font-size: 12px; }
.toolbar .end { margin-left: auto; margin-right: 0; }

.work { flex: 1; min-height: 0; display: flex; background: #f0f0f0; }
.panel { width: 264px; flex-shrink: 0; display: flex; flex-direction: column; background: linear-gradient(#f3f3f3 20px, #d2d2d2 240px, #a5a29b); border-left: 1px solid #bbb; }
.phead { height: 15px; background: #bfcddc; display: flex; align-items: center; gap: 4px; padding-right: 3px; }
.phead h2 { flex: 1; font-size: 11px; line-height: 14px; padding-left: 1px; color: #111; }
.phead button, .phead svg { width: 11px; height: 11px; }
.pform { display: grid; grid-template-columns: 1fr 58px; column-gap: 3px; row-gap: 3px; padding: 7px 11px 0 8px; }
.pform > button, .pair button { background: #e3e3e3; border: 1px solid #b4b4b4; height: 24px; }
.pform > input, .ws { height: 24px; background: #fff; border: 1px solid #9d9d9d; width: 100%; }
.ws .c { right: 5px; }
.radios { display: flex; align-items: center; gap: 10px; }
.radios label { display: flex; align-items: center; gap: 3px; white-space: nowrap; }
.radios input { appearance: none; width: 12px; height: 12px; border: 1px solid #555; border-radius: 50%; background: #fff; }
.radios input:checked { background: radial-gradient(circle, #222 3px, #fff 4px); }
.pair { display: flex; justify-content: space-between; }
.pair button { width: 21px; height: 20px; }
.pair .wide { width: 33px; gap: 2px; }
.tree { flex: 1; margin: 5px 11px 0 9px; background: #fff; border: 1px solid #aaa; padding: 3px 4px 0 5px; overflow: hidden; line-height: 15px; color: #111; }
.root, .src { display: flex; align-items: center; gap: 3px; height: 15px; }
.root b { flex: 1; background: #9ab3d2; padding-left: 1px; font-size: 11px; line-height: 15px; }
.box { width: 9px; height: 9px; border: 1px solid #888; background: linear-gradient(#555, #555) center / 5px 1px no-repeat #fff; flex-shrink: 0; }
.src { padding-left: 11px; }
.src span { flex: 1; }
.g1 { width: 17px; height: 15px; border-left: 1px solid #ddd; }
.g2 { width: 16px; height: 15px; border-left: 1px solid #ddd; margin-left: -3px; }
.tree li { display: grid; grid-template-columns: 15px 1fr 17px 16px; height: 15px; align-items: center; padding-left: 33px; }
.tree li > span { overflow: hidden; white-space: nowrap; padding-left: 2px; border-top: 1px solid #ddd; height: 15px; line-height: 14px; }
.tree li i { border-top: 1px solid #ddd; border-left: 1px solid #ddd; height: 15px; }
.tree li .p { width: 17px; height: 15px; padding: 2px 3px 1px; border-top: 1px solid #ddd; border-left: 1px solid #ddd; }
.tree li.sel > span, .tree li.sel .p, .tree li.sel i { background: #0a78d7; color: #fff; border-color: #0a78d7; }
.tree ul { background: linear-gradient(#ddd, #ddd) right bottom / 184px 1px no-repeat; padding-bottom: 1px; }
.ptabs { height: 26px; display: flex; align-items: flex-end; padding: 0 0 3px 3px; }
.ptabs button { height: 14px; padding: 0 12px; background: #8a8a86; clip-path: polygon(0 0, 100% 0, calc(100% - 7px) 100%, 7px 100%); position: relative; margin-right: -4px; }
.ptabs button::before { content: ""; position: absolute; inset: 1px; background: #efefef; clip-path: polygon(0 0, 100% 0, calc(100% - 6px) 100%, 6px 100%); }
.ptabs span { position: relative; }
.ptabs .on { background: none; font-size: 11px; font-weight: bold; padding: 0 8px; }
.ptabs .on::before { background: none; }

.editor { flex: 1; min-width: 0; display: flex; flex-direction: column; position: relative; border-left: 1px solid #c9c9c9; margin-left: 2px; }
.doctabs { height: 28px; padding: 2px 3px 4px; display: flex; gap: 4px; border-bottom: 1px solid #c8c8c8; }
.doctabs button { height: 22px; padding: 0 2px 0 4px; gap: 4px; background: #ebebeb; border: 1px solid #c2c2c2; border-radius: 2px; color: #222; }
.doctabs .on { background: #fff; }
.view { flex: 1; min-height: 0; display: grid; grid-template: 1fr 16px / 1fr 15px; }
.sheet { width: 100%; height: 100%; background: #fff; overflow: hidden; }
.wire { stroke: #000080; stroke-width: 2; fill: none; }
.pin { stroke: #000; stroke-width: 2; }
.part { stroke: #0000f0; stroke-width: 2; fill: #fff; }
.dot { fill: #000080; }
.netname, .ref { font: 13px "Liberation Serif", "Noto Sans CJK SC", serif; fill: #8b1a1a; }
.ref { fill: #1c1c8c; }
.note { font: 300 19px "Liberation Serif", "Noto Sans CJK SC", serif; fill: #26269a; }
.chev { fill: none; stroke: #444; stroke-width: 2; }
.vbar { display: flex; flex-direction: column; align-items: center; padding: 3px 0; background: #f0f0f0; }
.vbar svg, .hbar svg { width: 10px; height: 10px; }
.vbar i { width: 100%; height: 68px; background: #cdcdcd; margin-top: 232px; margin-bottom: auto; }
.hbar { grid-column: 1 / 3; display: flex; align-items: center; padding: 0 19px 0 2px; }
.hbar i { width: 144px; height: 16px; background: #cdcdcd; margin-left: 482px; margin-right: auto; }
.edbar { height: 18px; border-top: 1px solid #a8a8a8; display: flex; justify-content: space-between; padding-left: 6px; }
.edtab { position: relative; height: 17px; padding: 0 8px; background: #999; font-size: 11px; font-weight: bold; color: #000; clip-path: polygon(0 0, 100% 0, calc(100% - 5px) 100%, 5px 100%); }
.edtab::before { content: ""; position: absolute; inset: 0 1px 1px; background: #fff; clip-path: polygon(0 0, 100% 0, calc(100% - 5px) 100%, 5px 100%); }
.edtab span { position: relative; }
.mask { display: flex; gap: 1px; color: #666; }
.mask button { padding: 0 4px; border: 1px solid #d0d0d0; height: 17px; background: #efefef; }
.mask button:first-child { width: 30px; }
.mask button:nth-child(2) { width: 30px; padding: 0 1px; }
.mask button:nth-child(2) svg { width: 26px; height: 14px; }
.ime { position: absolute; left: 492px; bottom: 0; height: 24px; display: flex; align-items: center; gap: 7px; background: #fff; border: 1px solid #bcd0ea; padding-right: 2px; color: #0b63c5; font-size: 14px; }
.ime svg { width: 15px; height: 16px; }
.ime b { width: 15px; line-height: 16px; }
.ime .sogou { width: 30px; height: 30px; margin: 0 -3px 4px -1px; }
.rail { width: 26px; flex-shrink: 0; display: flex; flex-direction: column; gap: 4px; padding: 1px 5px 0 4px; }
.rail button { writing-mode: vertical-rl; width: 17px; padding: 3px 0; background: #fbfbfb; border: 1px solid #e2e2e2; color: #666; font: 10px/14px "Noto Sans", sans-serif; }

.status { height: 23px; background: #f0f0f0; border-top: 2px solid #a0a0a0; border-bottom: 1px solid #777; display: flex; align-items: center; padding-left: 4px; gap: 10px; position: relative; }
.status > i { width: 1px; height: 16px; background: #aaa; position: absolute; }
.s1 { left: 305px; }
.s2 { left: 610px; }
.sbtns { margin-left: auto; display: flex; padding-right: 5px; color: #666; }
.sbtns button { height: 16px; padding: 0 5px; background: #fafafa; border: 1px solid #ddd; }
.sbtns button:nth-child(3), .sbtns button:nth-child(4) { padding: 0 9px; }
.sbtns .more { margin-left: 4px; padding: 0 1px; }
.taskbar { height: 28px; background: #efefef; display: flex; justify-content: space-between; }
.apps { display: flex; width: 573px; }
.apps button { flex: 1; position: relative; }
.apps svg, .tray svg { width: 16px; height: 16px; }
.apps .run { background: linear-gradient(#1f8aa3, #1f8aa3) center bottom / 27px 2px no-repeat; }
.apps .active { background: linear-gradient(#1f8aa3, #1f8aa3) center bottom / 100% 2px no-repeat #fafafa; }
.app { font: bold 8px "Liberation Sans", sans-serif; fill: #fff; }
.tray { display: flex; align-items: center; gap: 6px; padding-right: 23px; font: 12px/18px "Noto Sans", sans-serif; color: #000; }
.tray time { margin-right: 12px; margin-left: 3px; }
.share { margin-top: 15px; align-self: flex-start; height: 29px; background: #0e0f10; border-top-right-radius: 6px; display: flex; align-items: center; gap: 5px; padding: 0 10px 0 6px; color: #fff; font: 15px/22px "Noto Sans CJK SC", sans-serif; }
.share svg { width: 16px; height: 18px; }
```
